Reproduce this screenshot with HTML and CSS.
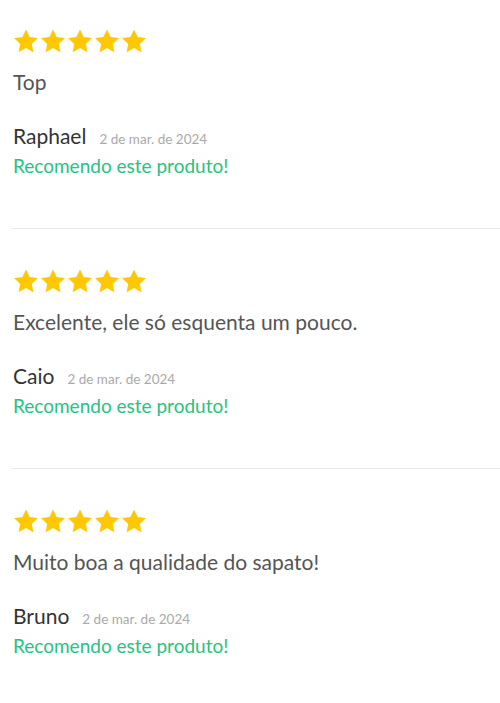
FILE: index.html
```html
<!DOCTYPE html>
<html lang="pt-BR">
<head>
    <meta charset="UTF-8">
    <meta name="viewport" content="width=device-width, initial-scale=1.0">
    <title>Avaliações</title>
    <link rel="stylesheet" href="styles.css">
</head>
<body>

<div class="reviews">
    <div class="review">
        <div class="stars">
            <svg viewBox="0 0 24 24"><path d="M12 .5l3.6 7.6 8.4 1-6.2 5.8 1.6 8.3L12 19.1l-7.4 4.1 1.6-8.3L0 9.1l8.4-1z"/></svg>
            <svg viewBox="0 0 24 24"><path d="M12 .5l3.6 7.6 8.4 1-6.2 5.8 1.6 8.3L12 19.1l-7.4 4.1 1.6-8.3L0 9.1l8.4-1z"/></svg>
            <svg viewBox="0 0 24 24"><path d="M12 .5l3.6 7.6 8.4 1-6.2 5.8 1.6 8.3L12 19.1l-7.4 4.1 1.6-8.3L0 9.1l8.4-1z"/></svg>
            <svg viewBox="0 0 24 24"><path d="M12 .5l3.6 7.6 8.4 1-6.2 5.8 1.6 8.3L12 19.1l-7.4 4.1 1.6-8.3L0 9.1l8.4-1z"/></svg>
            <svg viewBox="0 0 24 24"><path d="M12 .5l3.6 7.6 8.4 1-6.2 5.8 1.6 8.3L12 19.1l-7.4 4.1 1.6-8.3L0 9.1l8.4-1z"/></svg>
        </div>
        <p class="text">Top</p>
        <div class="author">
            <span class="name">Raphael</span>
            <span class="date">2 de mar. de 2024</span>
        </div>
        <div class="recommend">Recomendo este produto!</div>
    </div>

    <div class="review">
        <div class="stars">
            <svg viewBox="0 0 24 24"><path d="M12 .5l3.6 7.6 8.4 1-6.2 5.8 1.6 8.3L12 19.1l-7.4 4.1 1.6-8.3L0 9.1l8.4-1z"/></svg>
            <svg viewBox="0 0 24 24"><path d="M12 .5l3.6 7.6 8.4 1-6.2 5.8 1.6 8.3L12 19.1l-7.4 4.1 1.6-8.3L0 9.1l8.4-1z"/></svg>
            <svg viewBox="0 0 24 24"><path d="M12 .5l3.6 7.6 8.4 1-6.2 5.8 1.6 8.3L12 19.1l-7.4 4.1 1.6-8.3L0 9.1l8.4-1z"/></svg>
            <svg viewBox="0 0 24 24"><path d="M12 .5l3.6 7.6 8.4 1-6.2 5.8 1.6 8.3L12 19.1l-7.4 4.1 1.6-8.3L0 9.1l8.4-1z"/></svg>
            <svg viewBox="0 0 24 24"><path d="M12 .5l3.6 7.6 8.4 1-6.2 5.8 1.6 8.3L12 19.1l-7.4 4.1 1.6-8.3L0 9.1l8.4-1z"/></svg>
        </div>
        <p class="text">Excelente, ele só esquenta um pouco.</p>
        <div class="author">
            <span class="name">Caio</span>
            <span class="date">2 de mar. de 2024</span>
        </div>
        <div class="recommend">Recomendo este produto!</div>
    </div>

    <div class="review">
        <div class="stars">
            <svg viewBox="0 0 24 24"><path d="M12 .5l3.6 7.6 8.4 1-6.2 5.8 1.6 8.3L12 19.1l-7.4 4.1 1.6-8.3L0 9.1l8.4-1z"/></svg>
            <svg viewBox="0 0 24 24"><path d="M12 .5l3.6 7.6 8.4 1-6.2 5.8 1.6 8.3L12 19.1l-7.4 4.1 1.6-8.3L0 9.1l8.4-1z"/></svg>
            <svg viewBox="0 0 24 24"><path d="M12 .5l3.6 7.6 8.4 1-6.2 5.8 1.6 8.3L12 19.1l-7.4 4.1 1.6-8.3L0 9.1l8.4-1z"/></svg>
            <svg viewBox="0 0 24 24"><path d="M12 .5l3.6 7.6 8.4 1-6.2 5.8 1.6 8.3L12 19.1l-7.4 4.1 1.6-8.3L0 9.1l8.4-1z"/></svg>
            <svg viewBox="0 0 24 24"><path d="M12 .5l3.6 7.6 8.4 1-6.2 5.8 1.6 8.3L12 19.1l-7.4 4.1 1.6-8.3L0 9.1l8.4-1z"/></svg>
        </div>
        <p class="text">Muito boa a qualidade do sapato!</p>
        <div class="author">
            <span class="name">Bruno</span>
            <span class="date">2 de mar. de 2024</span>
        </div>
        <div class="recommend">Recomendo este produto!</div>
    </div>
</div>

</body>
</html>
```

FILE: styles.css
```css
body {
    font-family: Lato, "Open Sans", sans-serif;
    background-color: #fff;
    margin: 0;
    padding: 0;
}
.reviews {
    margin-left: 12px;
}
.review {
    padding: 29px 0 49px 1px;
    border-bottom: 1px solid #e6e6e6;
}
.review + .review {
    padding-top: 40px;
}
.stars {
    display: flex;
    gap: 3px;
    height: 24px;
    margin-left: 1px;
}
.stars svg {
    width: 24px;
    height: 24px;
    fill: #ffc800;
}
.text {
    margin: 15px 0 0;
    font-size: 21px;
    line-height: 28px;
    color: #555;
}
.author {
    margin-top: 26px;
    display: flex;
    align-items: baseline;
    gap: 13px;
}
.name {
    font-size: 21px;
    line-height: 28px;
    color: #333;
}
.date {
    font-size: 13.5px;
    color: #aaa;
}
.recommend {
    margin-top: 3px;
    font-size: 19px;
    line-height: 26px;
    color: #27c281;
}
```
